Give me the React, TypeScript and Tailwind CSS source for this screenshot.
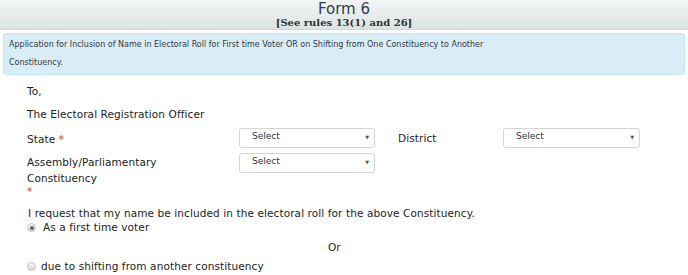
import React from 'react';

const SelectBox: React.FC<{ w?: string }> = ({ w = 'w-[136px]' }) => (
  <div className={`flex items-center justify-between ${w} h-[20px] border border-[#d5d5d5] rounded-[3px] bg-white pl-[12px] pr-[5px] text-[9px] tracking-normal text-[#333]`}>
    <span className="-mt-[2px]">Select</span>
    <span className="text-[5px] text-[#555]">▼</span>
  </div>
);

const Radio: React.FC<{ checked?: boolean }> = ({ checked }) => (
  <span className="inline-flex items-center justify-center w-[9px] h-[9px] rounded-full border border-[#c4c4c4] bg-gradient-to-b from-[#f6f6f6] to-[#d8d8d8]">
    {checked && <span className="w-[4px] h-[4px] rounded-full bg-[#666]" />}
  </span>
);

const App: React.FC = () => {
  return (
    <div className="w-[688px] h-[275px] bg-white overflow-hidden text-[#222]" style={{ fontFamily: '"DejaVu Sans", Verdana, sans-serif' }}>
      <div className="h-[30px] border-b border-[#cfd8da] bg-gradient-to-b from-[#f3f5f5] to-[#dde3e4] flex flex-col items-center">
        <div className="text-[15px] leading-[17px] text-[#2c3e50] mt-[1px]">Form 6</div>
        <div className="text-[10px] leading-[10px] font-bold text-[#333]" style={{ fontFamily: '"DejaVu Serif", "Liberation Serif", serif' }}>
          [See rules 13(1) and 26]
        </div>
      </div>

      <div className="mx-[3px] mt-[3px] border border-[#bce8f1] bg-[#d9edf7] rounded-[3px] px-[5px] py-[2px] text-[8px] leading-[18px] text-[#31393f]">
        <div className="w-[485px]">
          Application for Inclusion of Name in Electoral Roll for First time Voter OR on Shifting from One Constituency to Another Constituency.
        </div>
      </div>

      <div className="pl-[27px] text-[10.5px] tracking-[0.1px] text-[#222]">
        <div className="mt-[10px] leading-[13px]">To,</div>
        <div className="mt-[10px] leading-[13px]">The Electoral Registration Officer</div>

        <div className="flex mt-[7px]">
          <div className="w-[212px] pt-[5px] leading-[13px]">
            State <span className="text-[#e3342f]">*</span>
          </div>
          <SelectBox />
          <div className="w-[105px] ml-[23px] pt-[4px] leading-[13px]">District</div>
          <SelectBox w="w-[137px]" />
        </div>

        <div className="flex mt-[5px]">
          <div className="w-[212px] pt-[1px] leading-[16px]">
            <div>Assembly/Parliamentary</div>
            <div>Constituency</div>
            <div className="text-[#e3342f] leading-[11px]">*</div>
          </div>
          <SelectBox />
        </div>

        <div className="mt-[10px] leading-[13px] pl-[1px]">I request that my name be included in the electoral roll for the above Constituency.</div>
        <div className="flex items-center mt-[1px] leading-[13px]">
          <Radio checked />
          <span className="ml-[7px]">As a first time voter</span>
        </div>
        <div className="mt-[7px] leading-[13px] pl-[301px]">Or</div>
        <div className="flex items-center mt-[6px] leading-[13px]">
          <Radio />
          <span className="ml-[5px]">due to shifting from another constituency</span>
        </div>
      </div>
    </div>
  );
};

export default App;
